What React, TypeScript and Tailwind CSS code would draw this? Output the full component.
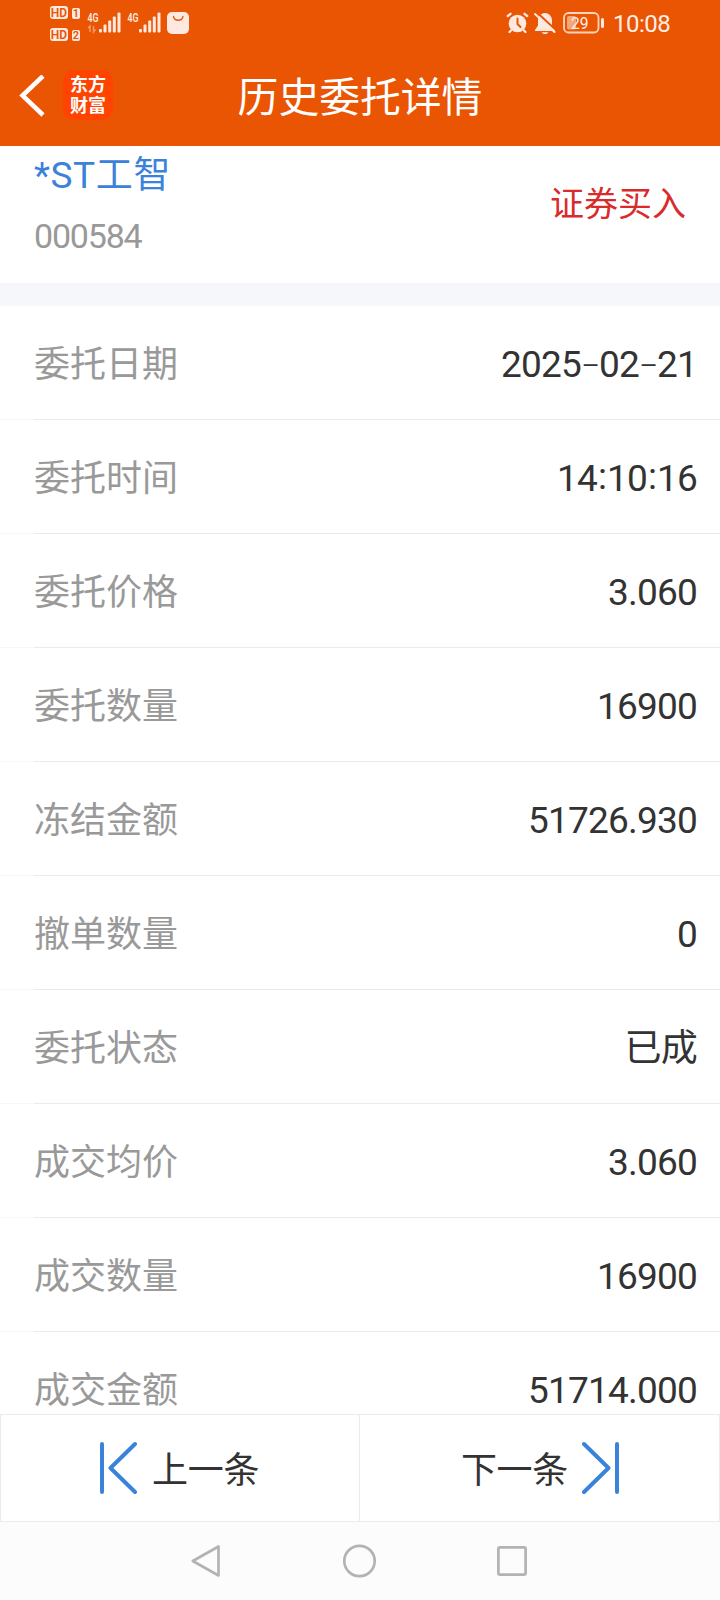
import React from 'react';

const rows = [
  { label: '委托日期', value: '2025-02-21' },
  { label: '委托时间', value: '14:10:16' },
  { label: '委托价格', value: '3.060' },
  { label: '委托数量', value: '16900' },
  { label: '冻结金额', value: '51726.930' },
  { label: '撤单数量', value: '0' },
  { label: '委托状态', value: '已成' },
  { label: '成交均价', value: '3.060' },
  { label: '成交数量', value: '16900' },
  { label: '成交金额', value: '51714.000' },
];

const HdBadge: React.FC<{ slot: string }> = ({ slot }) => (
  <div className="flex items-end gap-1 font-semibold text-[#ea5504]">
    <span className="flex h-[13px] w-[18px] items-center justify-center rounded-[3px] bg-[#fde9df] text-[12px] leading-none">
      HD
    </span>
    <span className="flex h-[11px] w-[8px] items-center justify-center rounded-[2px] bg-[#fde9df] text-[11px] leading-none">
      {slot}
    </span>
  </div>
);

const Signal: React.FC<{ arrows?: boolean }> = ({ arrows }) => (
  <svg className="h-[22px] w-[34px]" viewBox="0 0 34 22" fill="#fde9df">
    <text x="0.500" y="9.500" fontSize="12" fontWeight="600" textLength="11" lengthAdjust="spacingAndGlyphs">
      4G
    </text>
    {arrows && (
      <path d="M3 20V14L1 16M6.500 14v6l2-2.500" fill="none" stroke="#f39a68" strokeWidth="1.500" />
    )}
    <rect x="12" y="17" width="3" height="3.500" rx="1" />
    <rect x="16.500" y="12.500" width="3" height="8" rx="1" />
    <rect x="21.200" y="8.500" width="3" height="12" rx="1" />
    <rect x="25.800" y="4.500" width="3" height="16" rx="1" />
    <rect x="30.500" y="0.500" width="3" height="20" rx="1" />
  </svg>
);

const StatusBar: React.FC = () => (
  <div className="flex h-[46px] items-start justify-between pl-[50px] pr-[50px]">
    <div className="flex">
      <div className="flex flex-col gap-[9px] pt-[6px]">
        <HdBadge slot="1" />
        <HdBadge slot="2" />
      </div>
      <div className="ml-[7px] flex gap-[6px] pt-[12px]">
        <Signal arrows />
        <Signal />
      </div>
      <svg className="ml-[6px] mt-[12px] h-[22px] w-[22px]" viewBox="0 0 22 22">
        <rect width="22" height="22" rx="5" fill="#fde9df" />
        <path d="M6.500 4.500c1 5 8.500 5 9.500 0" fill="none" stroke="#ea5504" strokeWidth="1.300" strokeLinecap="round" />
      </svg>
    </div>

    <div className="flex pt-[12px]">
      <svg className="h-[22px] w-[23px]" viewBox="0 0 23 22" fill="none" strokeLinecap="round">
        <circle cx="11.500" cy="11.500" r="8.800" fill="#fde9df" />
        <path d="M1.800 4L4.500 1.800M21.200 4L18.500 1.800M5 18.500L3.500 20M18 18.500l1.500 1.500" stroke="#fde9df" strokeWidth="2.300" />
        <path d="M11.500 6.500v5.500l3 3" stroke="#ea5504" strokeWidth="2" />
      </svg>
      <svg className="ml-[5px] h-[23px] w-[22px]" viewBox="0 0 22 23">
        <path d="M11 1c-4.500.5-7 3.500-7 7.500v5L1 18v1h20v-1l-3-4.500v-5C18 4.500 15.500 1.500 11 1z" fill="#fde9df" />
        <path d="M7.500 20.300h7l-2 1.700h-3z" fill="#fde9df" />
        <path d="M2.500 0L22 18" stroke="#ea5504" strokeWidth="2" />
        <path d="M1 2L20.500 20" stroke="#fde9df" strokeWidth="2" strokeLinecap="round" />
      </svg>
      <svg className="ml-[7px] h-[22px] w-[42px]" viewBox="0 0 42 22">
        <rect x="1" y="1" width="34.500" height="19.500" rx="4.500" fill="none" stroke="#fbd3bd" strokeWidth="1.800" />
        <rect x="4" y="4" width="9" height="13.500" rx="2" fill="#f5a77c" />
        <rect x="38" y="6" width="3" height="10" rx="1.500" fill="#fde9df" />
        <text x="8" y="16.500" fontSize="16.500" fill="#fdf0e9" textLength="17.500" lengthAdjust="spacingAndGlyphs">
          29
        </text>
      </svg>
      <span className="ml-[8px] w-[57px] text-right text-[24px] leading-[25px] tracking-[-0.5px] text-[#fdeee6]">
        10:08
      </span>
    </div>
  </div>
);

const Header: React.FC = () => (
  <header className="h-[146px] shrink-0 bg-[#ea5504]">
    <StatusBar />
    <div className="grid h-[100px] grid-cols-[160px_1fr_160px] items-center">
      <div className="flex items-center gap-[18px] pl-[19px]">
        <svg className="h-[42px] w-[26px]" viewBox="0 0 26 42" fill="none" stroke="white" strokeWidth="4.500">
          <path d="M24 1L3.500 20.500L24 40" />
        </svg>
        <div className="mb-[2px] flex h-[50px] w-[50px] flex-col items-center justify-center rounded-[11px] bg-[#ff4400] pb-[1px] text-[18px] font-bold leading-[21px] text-white">
          <span>东方</span>
          <span>财富</span>
        </div>
      </div>
      <h1 className="pt-[5px] text-center text-[40.8px] leading-none text-white">历史委托详情</h1>
    </div>
  </header>
);

// The separators need a wider hyphen and a raised colon next to the digits
const Value: React.FC<{ text: string }> = ({ text }) => (
  <span className="pt-[4px] text-[37px] leading-none tracking-[-0.8px] text-[#333333]">
    {text.split(/([-:])/).map((part, i) => {
      if (part === '-') {
        return (
          <span key={i} className="inline-block w-[18px] origin-center scale-x-[1.6] text-center font-light">
            -
          </span>
        );
      }
      if (part === ':') {
        return (
          <span key={i} className="relative -top-[2px] inline-block w-[10px] text-center">
            :
          </span>
        );
      }
      return part;
    })}
  </span>
);

const App: React.FC = () => {
  return (
    <div className="flex h-[1600px] w-[720px] flex-col overflow-hidden bg-white font-[Roboto,'Noto_Sans_CJK_SC',sans-serif]">
      <Header />

      {/* Stock */}
      <section className="flex h-[137px] shrink-0 justify-between pl-[34px] pr-[34px]">
        <div className="flex flex-col">
          <span className="mt-[10px] text-[37px] leading-[40px] tracking-[0.6px] text-[#3b82d9]">*ST工智</span>
          <span className="mt-[20px] text-[34px] leading-[40px] tracking-[-1.2px] text-[#999999]">000584</span>
        </div>
        <span className="mt-[38px] text-[34px] leading-[40px] text-[#d92b2b]">证券买入</span>
      </section>
      <div className="h-[23px] shrink-0 bg-[#f5f7fa]" />

      {/* Order details */}
      <main className="min-h-0 flex-1 overflow-hidden">
        {rows.map((row) => (
          <div key={row.label} className="flex h-[114px] flex-col">
            <div className="flex flex-1 items-center justify-between pl-[34px] pr-[23px]">
              <span className="pt-[5px] text-[36px] leading-none text-[#999999]">{row.label}</span>
              <Value text={row.value} />
            </div>
            <div className="flex h-px">
              <div className="w-[34px] bg-[#f8f8f8]" />
              <div className="flex-1 bg-[#ebebeb]" />
            </div>
          </div>
        ))}
      </main>

      {/* Previous / next */}
      <div className="grid h-[108px] shrink-0 grid-cols-2 border border-[#ebebeb] text-[36px] text-[#333333]">
        <button className="flex items-center gap-[15px] border-r border-[#ebebeb] pl-[98px]">
          <svg className="h-[54px] w-[38px]" viewBox="0 0 38 54" fill="none" stroke="#3b82d9" strokeWidth="4" strokeLinecap="round" strokeLinejoin="round">
            <path d="M3 3v48M36 3L11.500 27L36 51" />
          </svg>
          <span className="pt-[5px] tracking-[-0.3px]">上一条</span>
        </button>
        <button className="flex items-center justify-end gap-[14px] pr-[99px]">
          <span className="pt-[5px] tracking-[-0.3px]">下一条</span>
          <svg className="h-[54px] w-[38px]" viewBox="0 0 38 54" fill="none" stroke="#3b82d9" strokeWidth="4" strokeLinecap="round" strokeLinejoin="round">
            <path d="M35 3v48M2 3L26.500 27L2 51" />
          </svg>
        </button>
      </div>

      {/* System navigation */}
      <nav className="flex h-[78px] shrink-0 items-center justify-between bg-[#fcfcfc] pl-[190px] pr-[193px]">
        <svg className="h-[34px] w-[32px]" viewBox="0 0 32 34" fill="none" stroke="#b3b3b3" strokeWidth="2.700" strokeLinejoin="round">
          <path d="M2.800 17L28.500 2.500v29z" />
        </svg>
        <svg className="h-[34px] w-[34px]" viewBox="0 0 34 34" fill="none" stroke="#b3b3b3" strokeWidth="2.700">
          <circle cx="16.500" cy="17" r="15.200" />
        </svg>
        <svg className="h-[30px] w-[30px]" viewBox="0 0 30 30" fill="none" stroke="#b3b3b3" strokeWidth="2.700">
          <rect x="1.400" y="1.400" width="27.200" height="27.200" rx="1.500" />
        </svg>
      </nav>
    </div>
  );
};

export default App;
